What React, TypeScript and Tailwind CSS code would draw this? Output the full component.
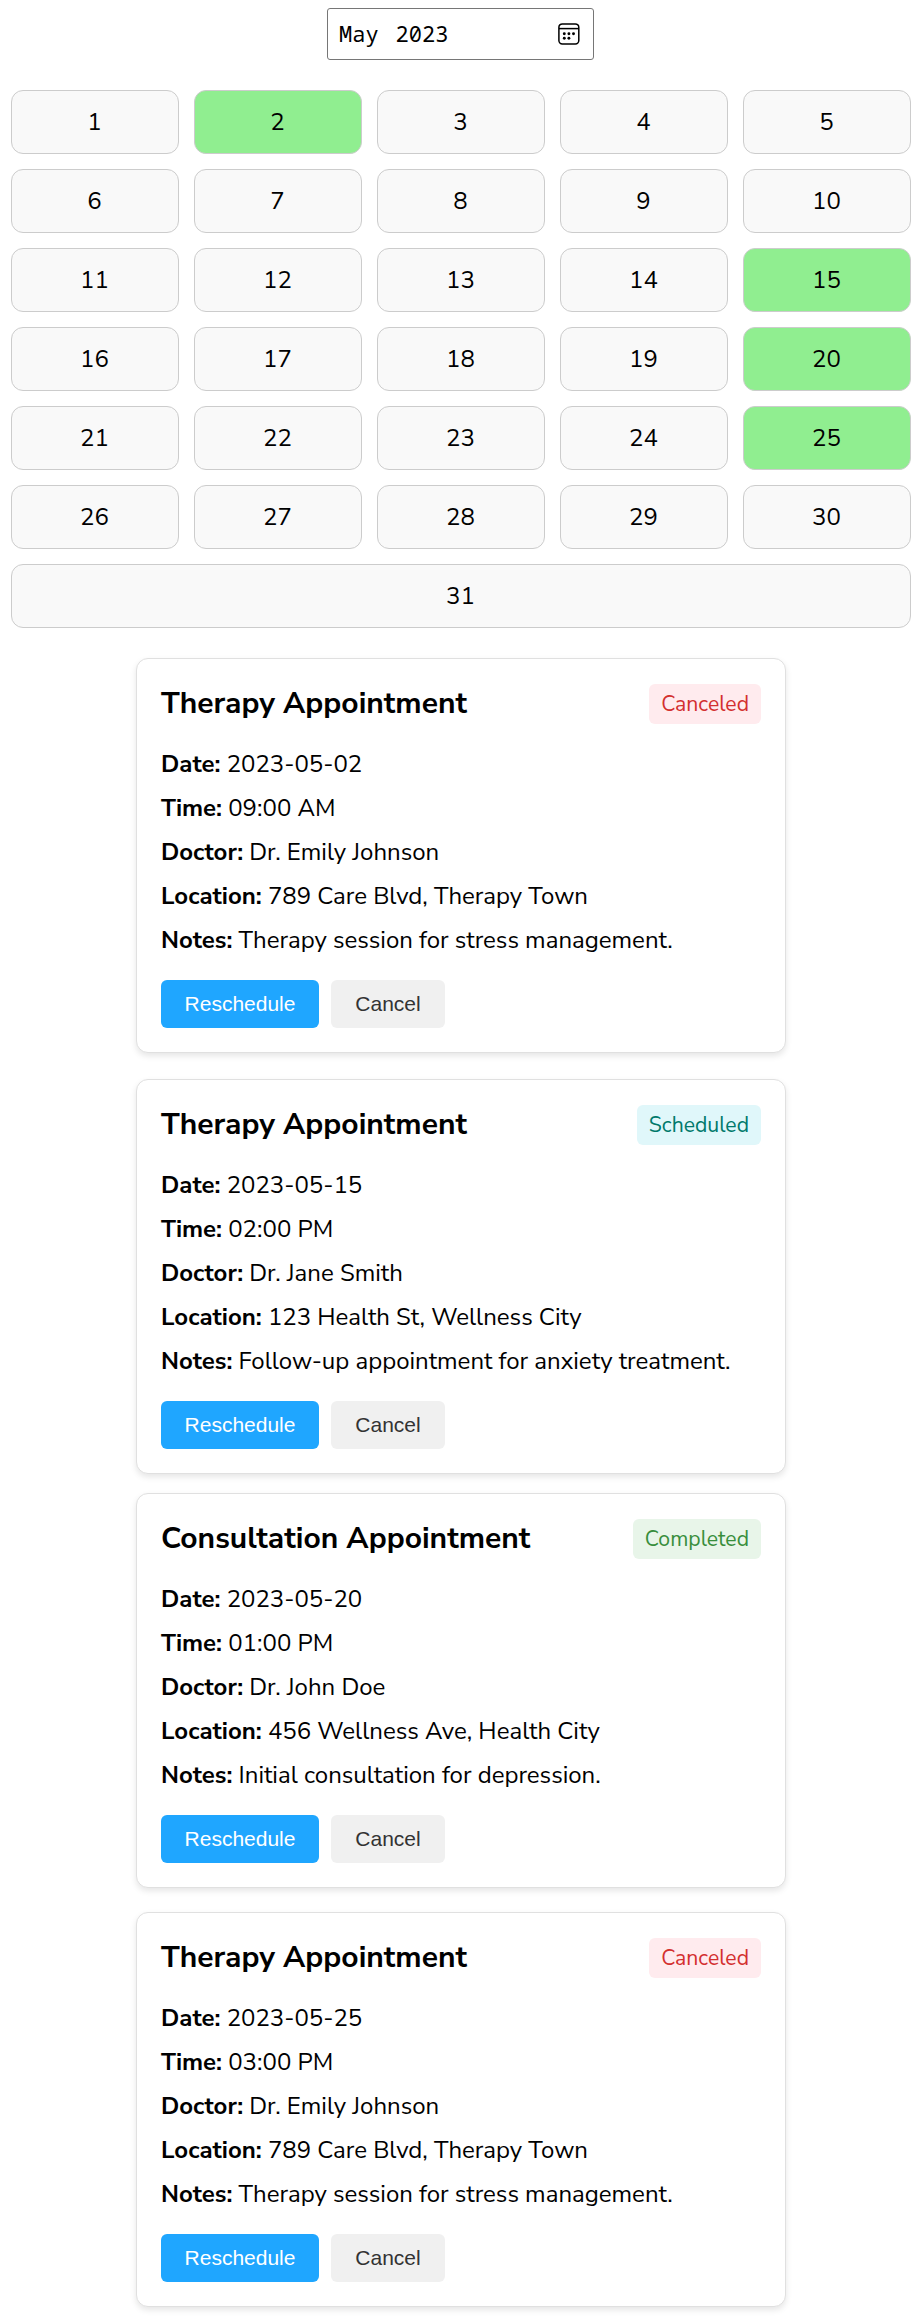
const booked = [2, 15, 20, 25];
const days = Array.from({ length: 31 }, (_, i) => i + 1);

type Status = "Canceled" | "Scheduled" | "Completed";

const appointments: {
  title: string;
  status: Status;
  gap: string;
  rows: [string, string][];
}[] = [
  {
    title: "Therapy Appointment",
    status: "Canceled",
    gap: "mt-[30px]",
    rows: [
      ["Date:", "2023-05-02"],
      ["Time:", "09:00 AM"],
      ["Doctor:", "Dr. Emily Johnson"],
      ["Location:", "789 Care Blvd, Therapy Town"],
      ["Notes:", "Therapy session for stress management."],
    ],
  },
  {
    title: "Therapy Appointment",
    status: "Scheduled",
    gap: "mt-[26px]",
    rows: [
      ["Date:", "2023-05-15"],
      ["Time:", "02:00 PM"],
      ["Doctor:", "Dr. Jane Smith"],
      ["Location:", "123 Health St, Wellness City"],
      ["Notes:", "Follow-up appointment for anxiety treatment."],
    ],
  },
  {
    title: "Consultation Appointment",
    status: "Completed",
    gap: "mt-[19px]",
    rows: [
      ["Date:", "2023-05-20"],
      ["Time:", "01:00 PM"],
      ["Doctor:", "Dr. John Doe"],
      ["Location:", "456 Wellness Ave, Health City"],
      ["Notes:", "Initial consultation for depression."],
    ],
  },
  {
    title: "Therapy Appointment",
    status: "Canceled",
    gap: "mt-[24px]",
    rows: [
      ["Date:", "2023-05-25"],
      ["Time:", "03:00 PM"],
      ["Doctor:", "Dr. Emily Johnson"],
      ["Location:", "789 Care Blvd, Therapy Town"],
      ["Notes:", "Therapy session for stress management."],
    ],
  },
];

const badge: Record<Status, string> = {
  Canceled: "bg-[#ffebee] text-[#d32f2f]",
  Scheduled: "bg-[#e0f7fa] text-[#00796b]",
  Completed: "bg-[#e8f5e9] text-[#388e3c]",
};

function CalendarIcon() {
  return (
    <svg width="22" height="22" viewBox="0 0 22 22" fill="none" stroke="#000" strokeWidth="1.5">
      <rect x="0.9" y="0.9" width="19.9" height="20" rx="3.4" />
      <path d="M1 5.6h20" />
      <g fill="#000" stroke="none">
        <circle cx="6.3" cy="10.8" r="1.45" />
        <circle cx="10.9" cy="10.8" r="1.45" />
        <circle cx="15.5" cy="10.8" r="1.45" />
        <circle cx="6.3" cy="15.3" r="1.45" />
        <circle cx="10.9" cy="15.3" r="1.45" />
      </g>
    </svg>
  );
}

export default function App() {
  return (
    <div className="flex h-[2320px] flex-col items-center bg-white px-[11px] pt-2 font-['Nunito_Sans','Nunito',sans-serif] text-2xl text-black">
      <div className="mr-px flex h-[52px] w-[267px] items-center justify-between rounded-[3px] border border-[#767676] pr-[13px] pl-[11px] font-['Noto_Sans_Mono',monospace] text-[22px]">
        <div className="flex gap-[17px]">
          <span>May</span>
          <span>2023</span>
        </div>
        <CalendarIcon />
      </div>

      <div className="mt-[30px] grid w-full grid-cols-5 gap-[15px]">
        {days.map((d) => (
          <div
            key={d}
            className={`flex h-16 items-center justify-center rounded-xl border border-[#ccc] pr-px ${
              booked.includes(d) ? "bg-[#90ee90]" : "bg-[#f9f9f9]"
            } ${d === 31 ? "col-span-5" : ""}`}
          >
            {d}
          </div>
        ))}
      </div>

      {appointments.map((a, i) => (
        <section
          key={i}
          className={`h-[395px] w-[650px] shrink-0 rounded-xl border border-[#e0e0e0] bg-white px-6 pt-[25px] shadow-[0_3px_6px_rgba(0,0,0,0.1)] ${a.gap}`}
        >
          <header className="flex h-10 items-center justify-between">
            <h2 className="text-[30px] leading-10 font-bold">{a.title}</h2>
            <span className={`h-10 rounded-md px-3 text-[21.2px] leading-10 ${badge[a.status]}`}>{a.status}</span>
          </header>
          <div className="mt-[18px]">
            {a.rows.map(([label, value]) => (
              <p key={label} className="leading-[44px]">
                <strong className="font-bold">{label}</strong> {value}
              </p>
            ))}
          </div>
          <div className="mt-[18px] flex gap-3 font-['Liberation_Sans',sans-serif] text-[21px]">
            <button className="h-12 w-[158px] rounded-md bg-[#1fa6ff] text-white">Reschedule</button>
            <button className="h-12 w-[114px] rounded-md bg-[#f0f0f0] text-[#333]">Cancel</button>
          </div>
        </section>
      ))}
    </div>
  );
}
